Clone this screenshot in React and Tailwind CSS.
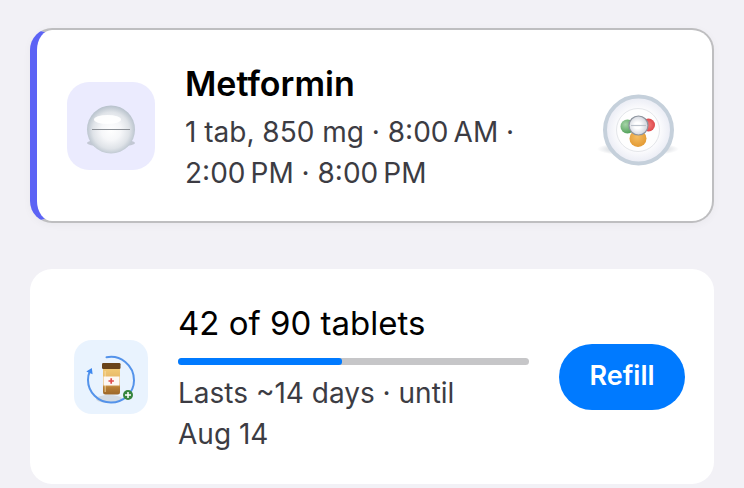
function PillIcon() {
  return (
    <svg viewBox="0 0 88 88" className="size-full" aria-hidden="true">
      <defs>
        <radialGradient id="pill" cx="0.5" cy="0.52" r="0.51">
          <stop offset="0" stopColor="#ffffff" />
          <stop offset="0.4" stopColor="#f6f7f9" />
          <stop offset="0.75" stopColor="#dfe3e8" />
          <stop offset="1" stopColor="#b9c3cd" />
        </radialGradient>
      </defs>
      <ellipse cx="44" cy="61" rx="24" ry="4" fill="#c3c8d4" />
      <circle cx="44" cy="47.5" r="24" fill="url(#pill)" />
      <ellipse cx="40.500" cy="37.500" rx="13.500" ry="4.500" fill="#fff" opacity="0.9" />
      <path d="M25 47.500H63" stroke="#8b9096" strokeWidth="1.2" />
    </svg>
  );
}

function PlateIcon() {
  return (
    <svg viewBox="0 0 88 88" className="size-[88px] shrink-0" role="img" aria-label="Medication plate">
      <defs>
        <radialGradient id="plate" cx="0.5" cy="0.5" r="0.5">
          <stop offset="0" stopColor="#ffffff" />
          <stop offset="0.65" stopColor="#fbfbfd" />
          <stop offset="1" stopColor="#e9ebf4" />
        </radialGradient>
        <radialGradient id="shade" cx="0.5" cy="0.5" r="0.5">
          <stop offset="0.7" stopColor="#dfe2e6" />
          <stop offset="1" stopColor="#dfe2e6" stopOpacity="0" />
        </radialGradient>
        <radialGradient id="green" cx="0.35" cy="0.35" r="0.65">
          <stop offset="0" stopColor="#a5d3a7" />
          <stop offset="1" stopColor="#55a35c" />
        </radialGradient>
        <radialGradient id="red" cx="0.5" cy="0.5" r="0.5">
          <stop offset="0.3" stopColor="#ee6b6b" />
          <stop offset="1" stopColor="#dc4a4c" />
        </radialGradient>
        <radialGradient id="orange" cx="0.45" cy="0.4" r="0.6">
          <stop offset="0" stopColor="#f5bd62" />
          <stop offset="1" stopColor="#e39a33" />
        </radialGradient>
        <radialGradient id="white" cx="0.45" cy="0.5" r="0.55">
          <stop offset="0.3" stopColor="#ffffff" />
          <stop offset="1" stopColor="#cdd1da" />
        </radialGradient>
      </defs>
      <ellipse cx="44" cy="67" rx="41" ry="7" fill="url(#shade)" />
      <circle cx="44.500" cy="48" r="33.500" fill="url(#plate)" stroke="#c5d0db" strokeWidth="4" />
      <circle cx="44" cy="48" r="21.500" fill="#fefefe" stroke="#e4e6ea" strokeWidth="1" />
      <circle cx="33.500" cy="44.500" r="7" fill="url(#green)" />
      <circle cx="54.500" cy="43" r="6.500" fill="url(#red)" />
      <circle cx="44" cy="56.500" r="8.500" fill="url(#orange)" />
      <circle cx="44.500" cy="43.500" r="9.500" fill="url(#white)" stroke="#8d949e" strokeWidth="1.2" />
      <path d="M37 43.500H52" stroke="#bcc3cc" strokeWidth="1.2" />
    </svg>
  );
}

function BottleIcon() {
  return (
    <svg viewBox="0 0 74 74" className="size-full" aria-hidden="true">
      <defs>
        <linearGradient id="bottle" x1="0" y1="0" x2="0" y2="1">
          <stop offset="0" stopColor="#f4cd78" />
          <stop offset="0.6" stopColor="#dfae60" />
          <stop offset="0.75" stopColor="#b67d34" />
          <stop offset="1" stopColor="#9c6728" />
        </linearGradient>
      </defs>
      <ellipse cx="35" cy="59" rx="13" ry="4" fill="#d3dbe3" />
      <path d="M32.500 17.300C46 14.500 60 25 60 40.500C60 53 49 62.500 37 62.500C24 62.500 14 52 14 40C14 37 14.500 34 15.800 31.500" fill="none" stroke="#5493ea" strokeWidth="2" strokeLinecap="round" />
      <path d="M12.300 31.500L17.800 28L18.600 34.300Z" fill="#3f88ee" />
      <rect x="29" y="27" width="17" height="27.500" rx="2.500" fill="url(#bottle)" />
      <path d="M31.200 31V52" stroke="#fae3ac" strokeWidth="1.200" opacity="0.7" />
      <rect x="28" y="23" width="18.500" height="6" rx="1.200" fill="#69431a" />
      <rect x="29.500" y="36.500" width="16" height="9" fill="#fdf8f3" />
      <path d="M37.200 38.300V43.700M34.500 41H39.900" stroke="#df4b4b" strokeWidth="1.700" />
      <circle cx="54" cy="55" r="5" fill="#36853d" />
      <path d="M54 52V58M51 55H57" stroke="#fff" strokeWidth="1.500" />
    </svg>
  );
}

export default function App() {
  return (
    <main className="flex min-h-screen flex-col gap-[46px] bg-[#f2f1f6] px-[30px] pt-7 pb-1 font-['Inter','Liberation_Sans',sans-serif]">
      <section className="flex items-center gap-[30px] rounded-[22px] border-2 border-l-[7px] border-[#bebec0] border-l-[#5c63f5] bg-white pt-7 pr-[30px] pb-[27px] pl-[30px] shadow-[0_2px_8px_rgba(0,0,0,0.04)]">
        <div className="size-[88px] shrink-0 rounded-[22px] bg-[#ebebfe]">
          <PillIcon />
        </div>
        <div className="min-w-0 flex-1">
          <h2 className="mb-0.5 text-[34px] leading-[52px] font-semibold text-black">Metformin</h2>
          <p className="text-[28px] leading-[41px] text-[#3c3c43]">
            {"1 tab, 850 mg · 8:00\u202fAM · 2:00\u202fPM · 8:00\u202fPM"}
          </p>
        </div>
        <PlateIcon />
      </section>

      <section className="flex items-center gap-[30px] rounded-[22px] bg-white py-[29px] pr-[29px] pl-11">
        <div className="size-[74px] shrink-0 rounded-[18px] bg-[#e9f3fe]">
          <BottleIcon />
        </div>
        <div className="min-w-0 flex-1">
          <h2 className="text-[33px] leading-[50px] text-black">42 of 90 tablets</h2>
          <div
            role="progressbar"
            aria-label="Tablets remaining"
            aria-valuemin={0}
            aria-valuemax={90}
            aria-valuenow={42}
            className="mt-2.5 mb-2 h-[7px] overflow-hidden rounded-full bg-[#c6c6c8]"
          >
            <div className="h-full rounded-r-[3px] bg-[#007aff]" style={{ width: `${(42 / 90) * 100}%` }} />
          </div>
          <p className="text-[28px] leading-[41px] text-[#3c3c43]">{"Lasts ~14 days · until Aug\u00a014"}</p>
        </div>
        <button type="button" className="h-[66px] w-[126px] shrink-0 rounded-full bg-[#007aff] text-[27px] font-semibold text-white">
          Refill
        </button>
      </section>
    </main>
  );
}
